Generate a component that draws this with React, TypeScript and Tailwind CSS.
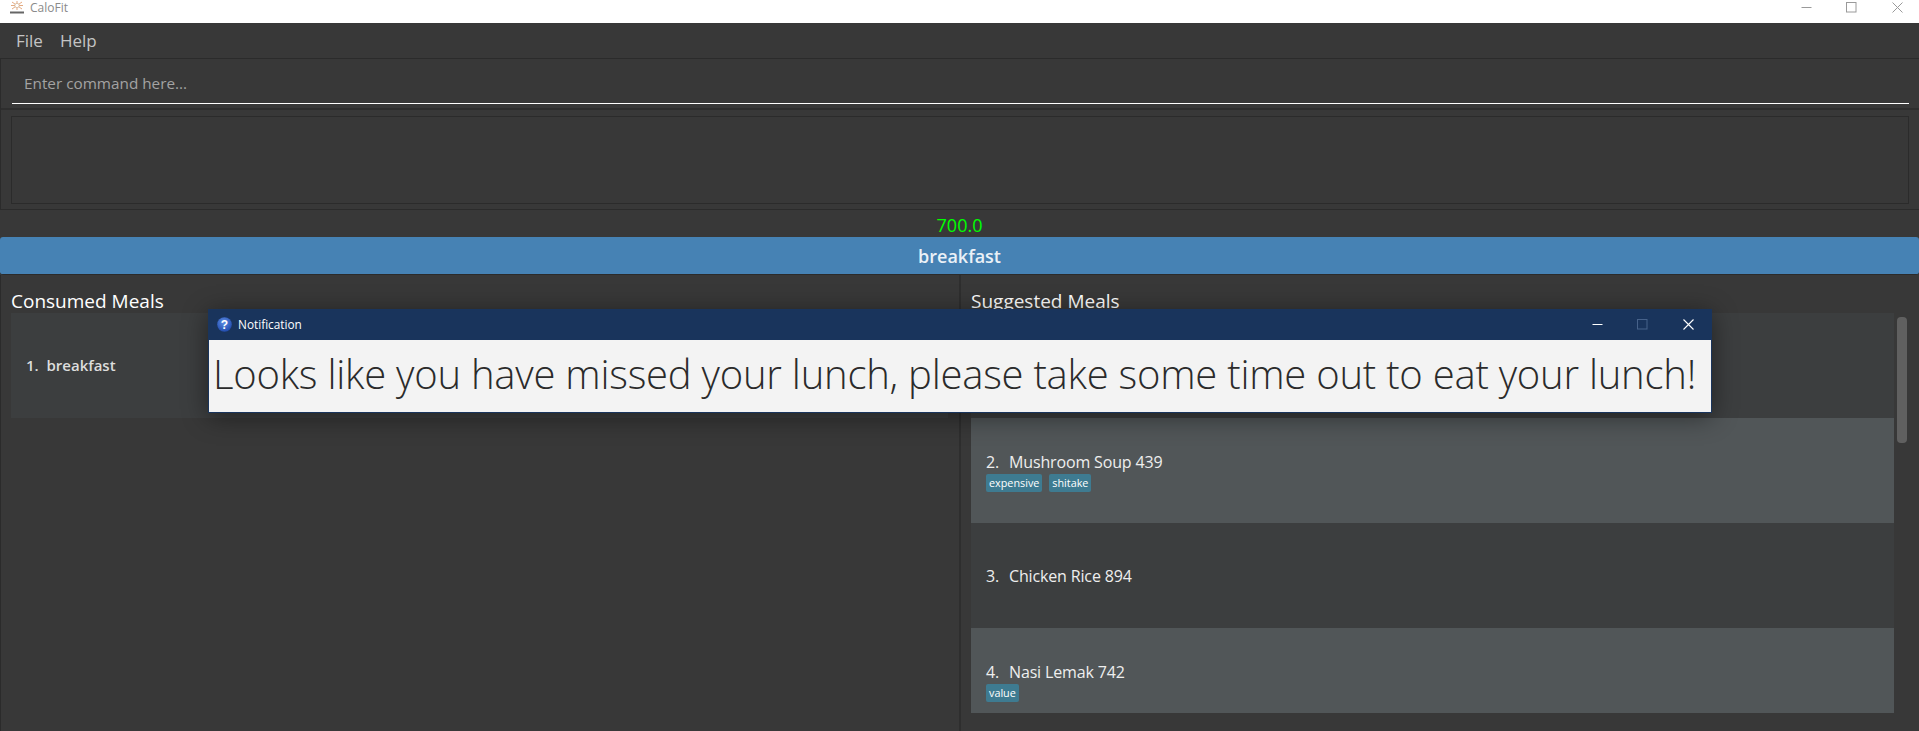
import React from "react";

function Tag({ children }: { children: React.ReactNode }) {
  return (
    <span className="h-[18px] px-[3px] rounded-[2px] bg-[#3e7b91] text-white text-[10.8px] leading-[18px] flex items-center">
      {children}
    </span>
  );
}

function Card({ n, name, tags, light, h }: { n?: string; name?: string; tags?: string[]; light?: boolean; h: string }) {
  return (
    <div className={`${h} ${light ? "bg-[#515658]" : "bg-[#3c3e3f]"} flex flex-col ${tags ? "pt-[34px]" : "justify-center"} pl-[15px]`}>
      {n && (
        <div className="flex text-[#eeeeee] text-[16px] tracking-[-0.15px] leading-[20px] font-medium whitespace-pre">
          <span className="w-[23px]">{n}.</span>
          <span>{name}</span>
        </div>
      )}
      {tags && (
        <div className="flex gap-[7px] mt-[2px]">
          {tags.map((t) => (
            <Tag key={t}>{t}</Tag>
          ))}
        </div>
      )}
    </div>
  );
}

function Logo() {
  return (
    <svg width="16" height="14" viewBox="0 0 16 14" className="shrink-0">
      <g stroke="#d9854a" strokeWidth="0.7">
        <path d="M3 1 L13 8 M13 1 L3 8 M8 0 V9 M2 4.5 H14" />
      </g>
      <circle cx="8" cy="4.5" r="2.2" fill="#fff" stroke="#c9a27c" strokeWidth="0.6" />
      <rect x="1" y="10.5" width="14" height="2" fill="#666" />
    </svg>
  );
}

function HelpIcon() {
  return (
    <svg width="15" height="15" viewBox="0 0 15 15" className="shrink-0">
      <defs>
        <radialGradient id="hg" cx="0.45" cy="0.35" r="0.7">
          <stop offset="0" stopColor="#5f8fe6" />
          <stop offset="1" stopColor="#1c46a8" />
        </radialGradient>
      </defs>
      <circle cx="7.5" cy="7.5" r="7.3" fill="url(#hg)" />
      <text x="7.5" y="12" textAnchor="middle" fontSize="12" fontWeight="700" fill="#fff" fontFamily="'Liberation Sans', sans-serif">?</text>
    </svg>
  );
}

export default function App() {
  return (
    <div className="relative w-[1919px] h-[731px] overflow-hidden bg-[#383838] flex flex-col font-['Open_Sans','Noto_Sans',sans-serif]">
      {/* OS title bar */}
      <div className="h-[23px] shrink-0 bg-white flex items-center pb-[8px]">
        <div className="ml-[9px] mr-[5px] flex"><Logo /></div>
        <span className="text-[#8a8a8a] text-[12px] leading-[16px]">CaloFit</span>
        <div className="ml-auto flex items-center mr-[16px]">
          <svg width="11" height="11" viewBox="0 0 11 11" className="mr-[34px]"><path d="M0.5 5.5H10.5" stroke="#9a9a9a" strokeWidth="1" /></svg>
          <svg width="11" height="11" viewBox="0 0 11 11" className="mr-[35px]"><rect x="0.5" y="0.5" width="9.5" height="9.5" fill="none" stroke="#9a9a9a" strokeWidth="1" /></svg>
          <svg width="11" height="11" viewBox="0 0 11 11"><path d="M0.5 0.5L10.5 10.5M10.5 0.5L0.5 10.5" stroke="#9a9a9a" strokeWidth="1" /></svg>
        </div>
      </div>

      {/* Menu */}
      <div className="h-[36px] shrink-0 flex items-center gap-[17px] pl-[16px] text-[#c4c4c4] text-[17px] border-b border-[#2b2b2b]">
        <span>File</span>
        <span>Help</span>
      </div>

      {/* Command box */}
      <div className="h-[51px] shrink-0 pl-[11px] pr-[10px] border-l border-l-[#2b2b2b] border-b-2 border-b-[#2e2e2e]">
        <div className="h-[45px] border-b-[1px] border-white flex items-center pl-[12px] pt-[4px] text-[#a3a3a3] text-[15.3px]">
          Enter command here...
        </div>
      </div>

      {/* Result display */}
      <div className="h-[100px] shrink-0 pl-[10px] pr-[10px] pt-[6px] border-l border-l-[#2b2b2b] border-b border-b-[#2b2b2b]">
        <div className="h-[88px] border border-[#2b2b2b] bg-[#383838]" />
      </div>

      {/* Calories */}
      <div className="h-[27px] shrink-0 flex items-center justify-center text-[#00ff00] text-[18px] pt-[3px]">700.0</div>

      {/* Meal banner */}
      <div className="h-[38px] shrink-0 rounded-[3px] bg-[#4682b4] border-b border-[#2b2b2b] flex items-center justify-center text-[#eaf1f7] text-[18px] font-semibold pt-[1px]">
        breakfast
      </div>

      {/* Lists */}
      <div className="flex-1 min-h-0 flex border-l border-l-[#2b2b2b]">
        <div className="w-[960px] shrink-0 border-r-2 border-[#2e2e2e] pl-[10px] pr-[11px]">
          <div className="h-[38px] flex items-end text-white text-[19px] leading-[24px]">Consumed Meals</div>
          <div className="h-[105px] bg-[#3c3e3f] flex items-center pl-[15px] text-[#dddddd] text-[15px] font-semibold whitespace-pre">1.  breakfast</div>
        </div>
        <div className="flex-1 min-w-0 pl-[10px]">
          <div className="h-[38px] flex items-end text-white text-[19px] leading-[24px]">Suggested Meals</div>
          <div className="flex">
            <div className="w-[923px] shrink-0 flex flex-col">
              <Card h="h-[105px]" />
              <Card n="2" name="Mushroom Soup 439" tags={["expensive", "shitake"]} light h="h-[105px]" />
              <Card n="3" name="Chicken Rice 894" h="h-[105px]" />
              <Card n="4" name="Nasi Lemak 742" tags={["value"]} light h="h-[85px]" />
            </div>
            <div className="w-[10px] h-[126px] ml-[3px] mt-[4px] rounded-[4px] bg-[#606060]" />
          </div>
        </div>
      </div>

      {/* Notification dialog */}
      <div className="absolute left-[208px] top-[309px] w-[1504px] h-[104px] bg-[#19345c] shadow-[0_4px_24px_rgba(0,0,0,0.45)] flex flex-col">
        <div className="h-[31px] shrink-0 flex items-center pl-[9px]">
          <HelpIcon />
          <span className="ml-[6px] text-white text-[11.8px]">Notification</span>
          <div className="ml-auto flex items-center mr-[18px]">
            <svg width="11" height="11" viewBox="0 0 11 11" className="mr-[34px]"><path d="M0.5 5.5H10.5" stroke="#ffffff" strokeWidth="1" /></svg>
            <svg width="11" height="11" viewBox="0 0 11 11" className="mr-[35px]"><rect x="0.5" y="0.5" width="9.5" height="9.5" fill="none" stroke="#47628a" strokeWidth="1" /></svg>
            <svg width="11" height="11" viewBox="0 0 11 11"><path d="M0.5 0.5L10.5 10.5M10.5 0.5L0.5 10.5" stroke="#ffffff" strokeWidth="1.1" /></svg>
          </div>
        </div>
        <div className="h-[72px] ml-[1px] mr-[1px] bg-[#f3f3f3] text-[#2b2b2b] text-[40px] tracking-[-0.23px] leading-[68px] pl-[4px] whitespace-nowrap font-light">
          Looks like you have missed your lunch, please take some time out to eat your lunch!
        </div>
      </div>
    </div>
  );
}
